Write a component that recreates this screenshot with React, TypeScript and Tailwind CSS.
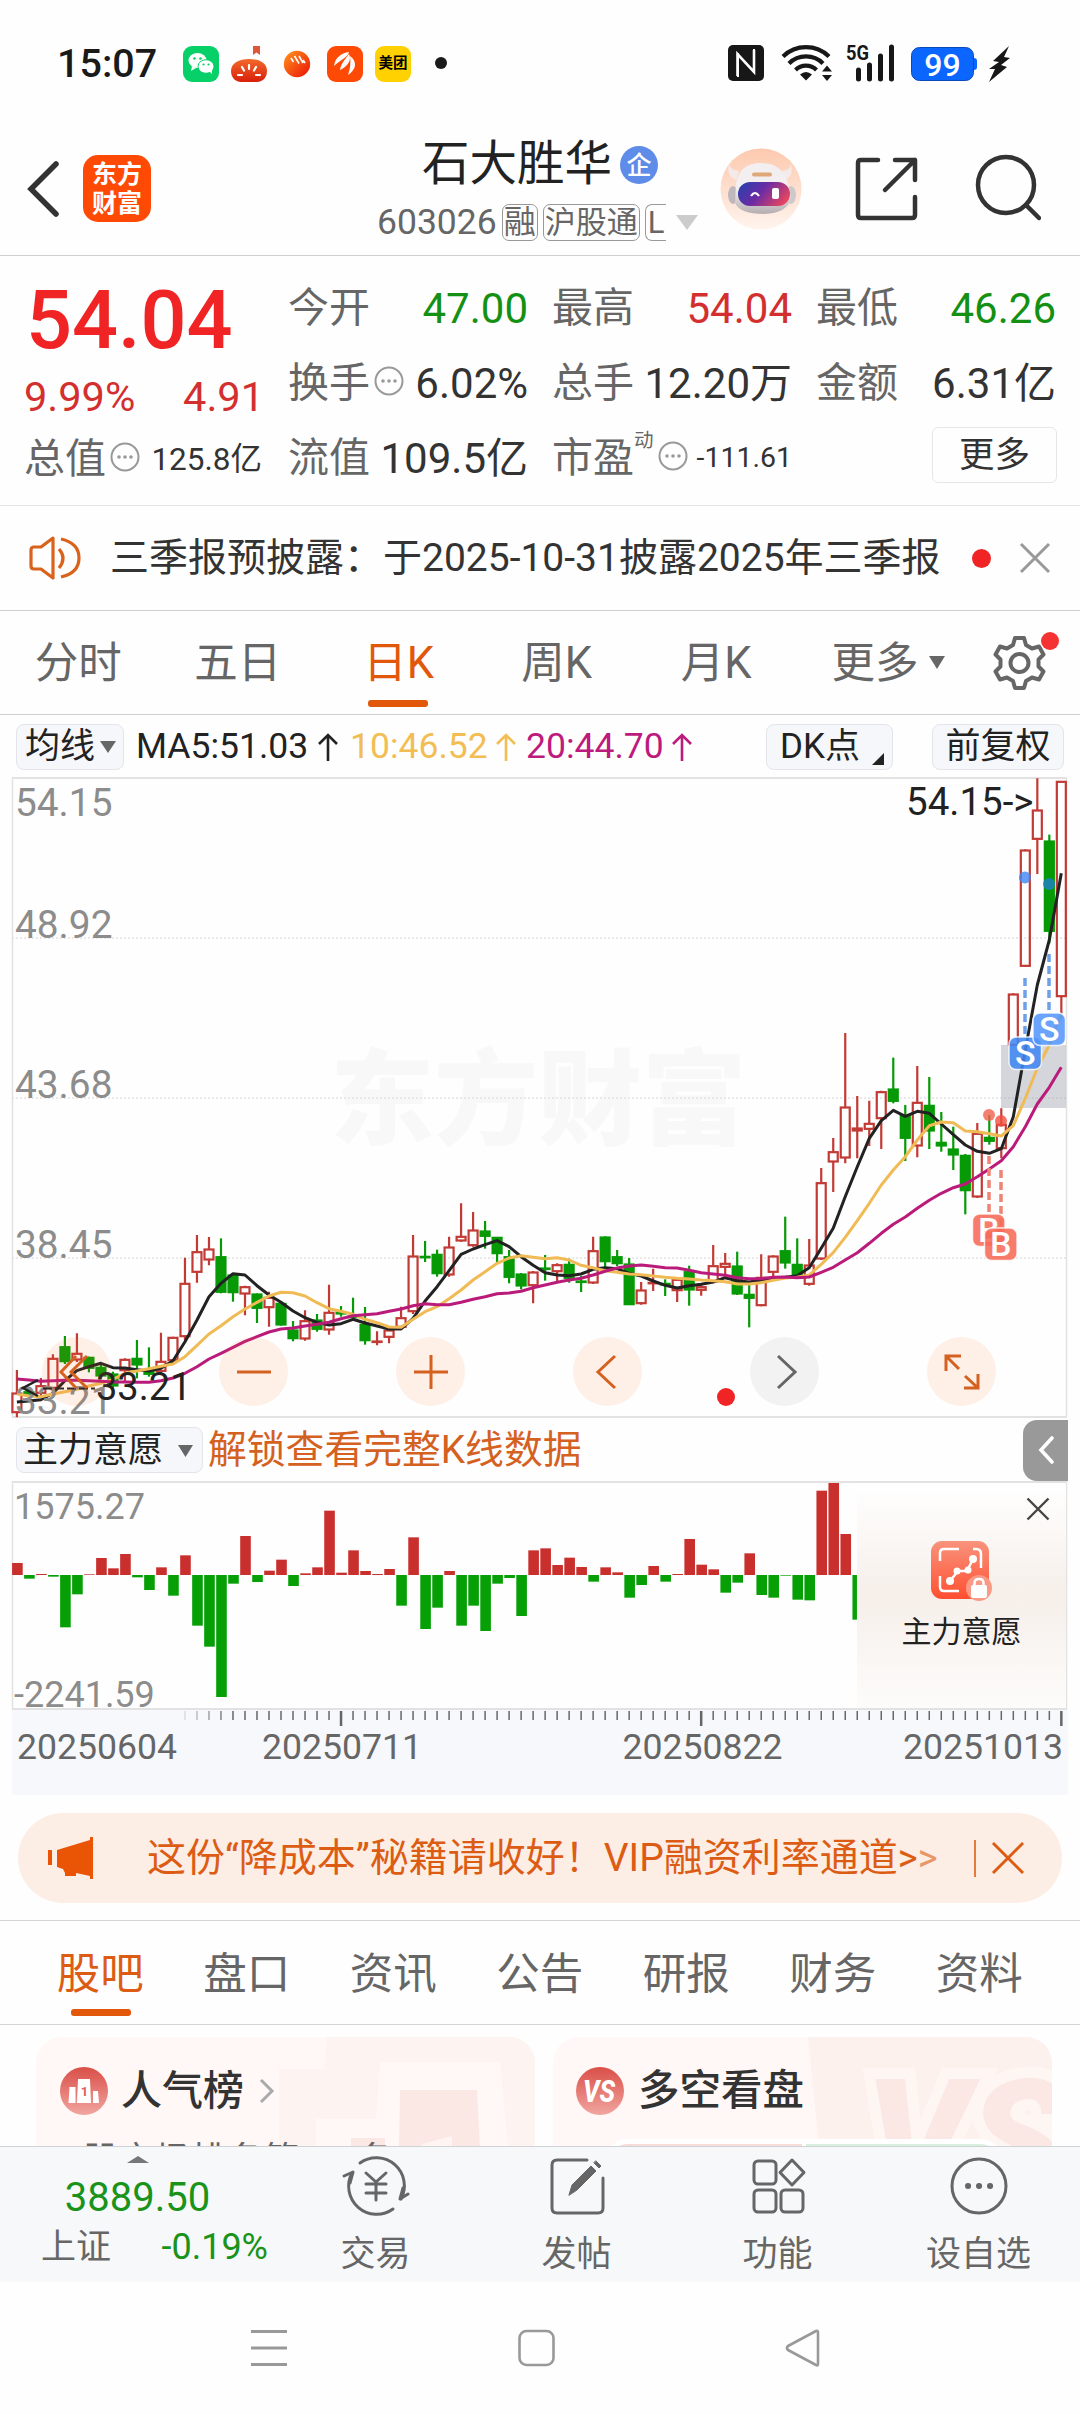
import type { ReactNode } from 'react';

// y values are in thirds of a pixel, measured from y=1000: [up, high, bodyTop, bodyBottom, low]
type Candle = [number, number, number, number, number];

const CANDLES_EARLY: Candle[] = [
  [1, 690, 759, 818, 832], [0, 745, 755, 765, 772], [1, 714, 737, 760, 768], [1, 643, 655, 745, 750],
  [0, 588, 620, 665, 672], [1, 580, 640, 660, 666], [0, 650, 652, 685, 697], [0, 670, 682, 708, 716],
  [0, 695, 702, 738, 746], [1, 655, 658, 692, 725], [0, 600, 655, 675, 715], [0, 622, 695, 703, 710],
  [1, 578, 664, 694, 700], [1, 590, 592, 662, 668], [1, 353, 430, 590, 600], [1, 285, 335, 397, 428],
  [1, 291, 327, 360, 376], [0, 295, 350, 457, 460], [0, 400, 405, 458, 485], [1, 437, 440, 462, 526],
  [0, 460, 462, 505, 549], [1, 455, 472, 503, 560], [0, 488, 490, 555, 557], [0, 543, 570, 596, 604],
  [1, 511, 542, 597, 602], [0, 522, 540, 568, 575], [1, 434, 517, 570, 584], [0, 498, 516, 522, 530],
  [0, 473, 528, 533, 540], [0, 501, 553, 602, 614], [1, 574, 603, 607, 616], [1, 565, 570, 592, 610],
  [1, 500, 533, 562, 565], [1, 285, 348, 515, 522], [0, 303, 349, 353, 366], [0, 329, 343, 401, 410],
  [1, 290, 321, 405, 410], [1, 190, 289, 303, 305], [1, 216, 270, 317, 320], [0, 243, 273, 289, 326],
  [0, 291, 292, 341, 370], [0, 330, 350, 412, 430], [0, 399, 402, 438, 448], [1, 393, 396, 437, 490],
  [0, 345, 384, 388, 422],
];

const CANDLES_LATE: Candle[] = [
  [1, 790, 794, 815, 845], [0, 776, 793, 835, 848], [0, 828, 843, 847, 876], [1, 710, 752, 849, 852],
  [0, 709, 711, 785, 804], [0, 750, 770, 791, 798], [0, 774, 792, 914, 915], [1, 846, 870, 911, 914],
  [1, 806, 847, 851, 873], [0, 838, 850, 854, 888], [1, 832, 838, 872, 906], [0, 797, 815, 870, 917],
  [1, 850, 860, 871, 887], [1, 735, 797, 846, 850], [1, 759, 790, 802, 832], [0, 755, 798, 882, 885],
  [0, 850, 883, 895, 982], [1, 763, 832, 917, 919], [1, 766, 768, 817, 830], [0, 650, 752, 789, 806],
  [0, 715, 793, 828, 832], [1, 717, 795, 853, 857], [1, 504, 548, 777, 780], [1, 414, 455, 486, 576],
  [1, 99, 321, 474, 490], [1, 288, 384, 393, 475], [1, 302, 370, 388, 438], [1, 272, 275, 356, 447],
  [0, 173, 267, 304, 310], [0, 315, 345, 415, 483], [1, 198, 307, 438, 472], [0, 231, 316, 393, 447],
  [0, 336, 427, 438, 455], [0, 380, 447, 465, 510], [0, 462, 466, 572, 643], [1, 369, 400, 591, 594],
  [0, 345, 412, 424, 434], [1, 325, 373, 446, 475], [1, -20, -18, 136, 138], [1, -452, -450, -101, -100],
  [1, -665, -570, -482, -378], [0, -496, -477, -206, -170], [1, -657, -656, -10, 55],
];

const CANDLES: Candle[] = [
  ...CANDLES_EARLY.map(([up, h, t, b, l]) => [up, h + 420, t + 420, b + 420, l + 420] as Candle),
  ...CANDLES_LATE,
];

const MA5 = [
  1206, 1203, 1199, 1180, 1142, 1112, 1100, 1090, 1103, 1104, 1109, 1113, 1105, 1082, 1025, 960, 890, 850, 821, 825,
  857, 885, 907, 933, 953, 967, 975, 971, 958, 969, 978, 987, 987, 955, 903, 860, 812, 763, 747, 734, 722, 740, 770,
  796, 818, 825, 827, 822, 808, 803, 806, 820, 828, 843, 856, 864, 857, 853, 846, 833, 842, 846, 840, 835, 832, 827,
  803, 745, 685, 590, 500, 415, 362, 331, 349, 334, 340, 372, 404, 435, 454, 460, 446, 350, 150, -45, -180, -380,
];
const MA10 = [
  1182, 1188, 1190, 1182, 1175, 1168, 1158, 1150, 1138, 1120, 1113, 1106, 1099, 1092, 1070, 1036, 1002, 977, 950, 927,
  907, 888, 877, 878, 888, 908, 926, 934, 943, 958, 968, 981, 982, 958, 935, 920, 896, 870, 840, 815, 790, 774, 767,
  772, 776, 773, 780, 796, 803, 812, 817, 822, 824, 828, 832, 835, 837, 840, 842, 845, 852, 852, 848, 841, 834, 832,
  825, 793, 758, 712, 662, 610, 555, 510, 470, 420, 377, 366, 368, 393, 395, 401, 408, 377, 295, 205, 135, 40,
];
const MA20 = [
  1137, 1140, 1144, 1142, 1141, 1141, 1142, 1144, 1146, 1146, 1147, 1147, 1142, 1134, 1120, 1100, 1077, 1060, 1042, 1024,
  1010, 996, 987, 984, 978, 973, 967, 956, 947, 944, 941, 934, 927, 917, 911, 914, 914, 907, 898, 890, 881, 879, 874,
  863, 855, 847, 840, 835, 825, 814, 804, 798, 795, 799, 803, 804, 811, 818, 822, 826, 833, 836, 836, 832, 831, 833,
  831, 817, 802, 780, 758, 730, 700, 673, 651, 625, 601, 580, 563, 552, 530, 507, 482, 440, 380, 312, 262, 202,
];

const WILL = [
  36, -11, 3, -5, -157, -58, 2, 51, 20, 63, -7, -45, 23, -62, 59, -152, -215, -366, -26, 117, -21, 13, 46, -33, 5, 23,
  193, 7, 74, 12, 3, 18, -92, 113, -162, -98, 12, -152, -92, -168, -26, -9, -123, 74, 80, 30, 52, 24, -20, 23, 8, -68,
  -30, 27, -20, 3, 108, 31, 17, -53, -23, 65, -60, -68, -2, -74, -76, 253, 276, 123, -134,
];

const cx = (i: number) => 16.9 + i * 12.005;
const cy = (v: number) => 223 + v / 3; // the chart starts at y=777
const toPoints = (line: number[]) => line.map((v, i) => `${cx(i).toFixed(1)},${cy(v).toFixed(1)}`).join(' ');

function StatusBar() {
  return (
    <div className="flex h-[126px] items-center pl-[57px]">
      <span className="w-[126px] pt-[2px] text-[39.500px] leading-none font-medium text-[#1a1a1a]">15:07</span>
      <div className="flex items-center gap-3 pt-[2px]">
        <svg width="36" height="36" viewBox="0 0 36 36">
          <rect width="36" height="36" rx="9" fill="#07d069" />
          <ellipse cx="14.5" cy="14.5" rx="9" ry="7.5" fill="#fff" />
          <path d="M9 20l-1 5 5-3z" fill="#fff" />
          <ellipse cx="23" cy="20.5" rx="8" ry="6.8" fill="#fff" stroke="#07d069" strokeWidth="1" />
          <path d="M26 25l3 3v-5z" fill="#fff" />
          <g fill="#07d069">
            <circle cx="11.5" cy="12.5" r="1.3" />
            <circle cx="17.5" cy="12.5" r="1.3" />
            <circle cx="20.5" cy="18.5" r="1.1" />
            <circle cx="25.5" cy="18.5" r="1.1" />
          </g>
        </svg>
        <svg width="36" height="38" viewBox="0 0 36 38">
          <defs>
            <linearGradient id="tomato" x1="0" y1="0" x2="0" y2="1">
              <stop offset="0" stopColor="#f26a2b" />
              <stop offset="1" stopColor="#d91f0b" />
            </linearGradient>
          </defs>
          <path d="M22 1h7v9l-3.5-2.5L22 10z" fill="#e0563a" />
          <path d="M0 26C0 18 8 14 18 14s18 4 18 12c0 7-5 11-10 11H10C5 37 0 33 0 26z" fill="url(#tomato)" />
          <path d="M18 20v4M11 22l2 3.500M25 22l-2 3.500M7 30h4M25 30h4" stroke="#fff" strokeWidth="2.200" strokeLinecap="round" />
        </svg>
        <svg width="36" height="36" viewBox="0 0 36 36">
          <defs>
            <linearGradient id="ball" x1="0" y1="0" x2="1" y2="1">
              <stop offset="0.1" stopColor="#ff8a1c" />
              <stop offset="0.8" stopColor="#ef2a0a" />
            </linearGradient>
          </defs>
          <circle cx="18" cy="18" r="13.200" fill="url(#ball)" />
          <path d="M12 12l2.500 4M15.500 10l4.500 7.500M20 10l4 7M24 14l2 3" stroke="#fff" strokeWidth="1.600" />
        </svg>
        <svg width="36" height="36" viewBox="0 0 36 36">
          <rect width="36" height="36" rx="9" fill="#ff4a05" />
          <path d="M7 20C8 12 14 7 22 6c-1 5-7 7-15 14zM13 24c1-7 5-10 9-16 3 6-1 12-9 16zM21 29c2-6 3-11 2-19 7 5 7 13-2 19z" fill="#fff" />
        </svg>
        <div className="flex h-9 w-9 items-center justify-center rounded-[9px] bg-[#ffd100] text-[14.500px] leading-none font-bold text-black">美团</div>
      </div>
      <div className="ml-6 h-3 w-3 rounded-full bg-[#1a1a1a]" />
      <svg className="ml-[278px]" width="290" height="40" viewBox="725 43 290 40">
        <rect x="728" y="45" width="36" height="36" rx="5" fill="#171717" />
        <path d="M737.500 76V54l16.500 18V50" stroke="#fff" strokeWidth="2.600" fill="none" />
        <path d="M738 53v24M754 49v24" stroke="#fff" strokeWidth="2" />
        <g fill="none" stroke="#171717" strokeWidth="4.200">
          <path d="M783 56.500a33 33 0 0 1 46 0" />
          <path d="M789 63.500a24 24 0 0 1 34 0" />
          <path d="M795.500 70a15 15 0 0 1 21 0" />
        </g>
        <path d="M800 74.500q6-5 12 0l-6 6z" fill="#171717" />
        <path d="M822 71.500l5-6 5 6zM822 75l5 6 5-6z" fill="#171717" />
        <text x="846" y="60" fontSize="20" fontWeight="700" fill="#171717" textLength="23" lengthAdjust="spacingAndGlyphs">5G</text>
        <path d="M858.500 70v9M869.500 65v14M880.500 56v23M891.500 47v32" stroke="#171717" strokeWidth="5" strokeLinecap="round" />
        <rect x="911.500" y="47.500" width="62" height="33" rx="8" fill="#0a66ff" stroke="#0b49b8" />
        <path d="M974 58q3 0 3 3v6q0 3-3 3z" fill="#0a66ff" />
        <text x="942.500" y="75.500" fontSize="32" fontWeight="500" fill="#fff" textAnchor="middle">99</text>
        <path d="M1009 46l-16 15 6 1-10 7h6l-6 13 18-15-6-2 9-7-6-1z" fill="#171717" />
      </svg>
    </div>
  );
}

function Header() {
  return (
    <div className="flex h-[130px] border-b border-[#cfd0d2] text-[#333]">
      <svg className="mt-[34px] ml-[25px]" width="36" height="58" viewBox="0 0 36 58">
        <path d="M31 4L6 29l25 25" fill="none" stroke="#333" strokeWidth="5.500" strokeLinecap="round" />
      </svg>
      <div className="mt-[29px] ml-[22px] flex h-[67px] w-[68px] flex-col items-center justify-center rounded-[15px] bg-[#ff4a05] text-[25px] leading-[29px] font-bold text-white">
        <span>东方</span>
        <span>财富</span>
      </div>
      <div className="ml-[226px] w-[343px]">
        <div className="mt-[15px] flex h-12 items-center pl-[45px] text-[47.500px] leading-none text-[#222]">
          石大胜华
          <span className="ml-[8px] flex h-[38px] w-[38px] items-center justify-center rounded-full bg-[#5f8ce8] text-[25px] font-medium text-white">企</span>
        </div>
        <div className="mt-[15px] flex h-9 items-center text-[35.500px] leading-none text-[#666]">
          <span className="pt-[2px]">603026</span>
          <span className="ml-[5px] flex h-[37px] items-center rounded-[7px] border-[1.500px] border-[#999] px-[1px] text-[32px]">融</span>
          <span className="ml-[5px] flex h-[37px] w-[97px] items-center justify-center rounded-[7px] border-[1.500px] border-[#999] text-[31px]">沪股通</span>
          <span className="ml-[5px] flex h-[37px] w-[21px] items-center rounded-l-[7px] border-[1.500px] border-r-0 border-[#999] pl-[2px] text-[31px]">L</span>
          <svg className="ml-[10px]" width="22" height="15" viewBox="0 0 22 15">
            <path d="M0 0h22L11 15z" fill="#ccc" />
          </svg>
        </div>
      </div>
      <svg className="mt-[22px]" width="82" height="82" viewBox="0 0 82 82">
        <defs>
          <linearGradient id="halo" x1="0" y1="0" x2="0" y2="1">
            <stop offset="0" stopColor="#fdc9ae" />
            <stop offset="1" stopColor="#fff4ee" />
          </linearGradient>
          <linearGradient id="visor" x1="0" y1="0.200" x2="1" y2="0.600">
            <stop offset="0" stopColor="#2b3fae" />
            <stop offset="0.450" stopColor="#6a2ba4" />
            <stop offset="1" stopColor="#e8455f" />
          </linearGradient>
          <linearGradient id="helmet" x1="0" y1="0" x2="0" y2="1">
            <stop offset="0.500" stopColor="#f3eff0" />
            <stop offset="1" stopColor="#b5adb0" />
          </linearGradient>
        </defs>
        <circle cx="41" cy="41" r="40.500" fill="url(#halo)" />
        <path d="M9 16q2 7 10 7l-3 9q-10-4-7-16zM71 16q-1 7-9 7l3 9q9-4 6-16z" fill="#f3eaea" />
        <ellipse cx="13" cy="47" rx="5" ry="9" fill="#bfb8bc" />
        <ellipse cx="71" cy="47" rx="5" ry="9" fill="#cfc8cb" />
        <path d="M16 35Q20 15 41 15t27 20l3 15Q68 65 44 66 20 66 15 55z" fill="url(#helmet)" />
        <rect x="32" y="24.500" width="20" height="4" rx="2" fill="#e0a878" />
        <rect x="18" y="34" width="52" height="24" rx="12" fill="url(#visor)" />
        <path d="M31 48q4-6 8 0" fill="none" stroke="#fff" strokeWidth="2.200" />
        <rect x="52" y="40" width="7" height="11" rx="2" fill="#fff" />
      </svg>
      <svg className="mt-[29px] ml-[51px]" width="68" height="68" viewBox="0 0 68 68">
        <g fill="none" stroke="#333" strokeWidth="4.500" strokeLinecap="round" strokeLinejoin="round">
          <path d="M25 5H8q-3 0-3 3v52q0 3 3 3h51q3 0 3-3V42" />
          <path d="M42 5h20v20M62 5L32 35" />
        </g>
      </svg>
      <svg className="mt-[27px] ml-[52px]" width="68" height="72" viewBox="0 0 68 72">
        <g fill="none" stroke="#333" strokeWidth="4.500" strokeLinecap="round">
          <circle cx="33" cy="32" r="28" />
          <path d="M53 52l13 13" />
        </g>
      </svg>
    </div>
  );
}

function Dots() {
  return (
    <svg className="mb-[6px] shrink-0" width="30" height="30" viewBox="0 0 30 30">
      <circle cx="15" cy="15" r="13.500" fill="none" stroke="#999" strokeWidth="2" />
      <circle cx="9" cy="15" r="1.800" fill="#999" />
      <circle cx="15" cy="15" r="1.800" fill="#999" />
      <circle cx="21" cy="15" r="1.800" fill="#999" />
    </svg>
  );
}

function Cell({ label, children }: { label: ReactNode; children: ReactNode }) {
  return (
    <div className="flex h-[75px] items-center justify-between leading-none">
      <span className="flex items-center text-[41px] text-[#666]">{label}</span>
      {children}
    </div>
  );
}

function Quote() {
  return (
    <div className="flex h-[250px] border-b border-[#e4e5e8] pt-[15px] pl-[24px] text-[42px] text-[#333]">
      <div className="w-[238px] leading-none">
        <div className="flex h-[98px] items-center pl-[2px] text-[81px] font-medium text-[#f02424]">54.04</div>
        <div className="-mr-[2px] flex h-[55px] items-center justify-between text-[41.500px] text-[#d32f2f]">
          <span>9.99%</span>
          <span>4.91</span>
        </div>
        <div className="flex h-[71px] items-center justify-between text-[41px] text-[#666]">
          <span className="flex items-center gap-[4px]">总值<Dots /></span>
          <span className="text-[31.500px] text-[#333]">125.8亿</span>
        </div>
      </div>
      <div className="ml-[26px] w-[240px]">
        <Cell label="今开"><span className="text-[#149114]">47.00</span></Cell>
        <Cell label={<><span className="mr-[4px]">换手</span><Dots /></>}><span>6.02%</span></Cell>
        <Cell label="流值"><span>109.5亿</span></Cell>
      </div>
      <div className="ml-[24px] w-[240px]">
        <Cell label="最高"><span className="text-[#d32f2f]">54.04</span></Cell>
        <Cell label="总手"><span>12.20万</span></Cell>
        <Cell label={<>市盈<span className="mb-9 text-[19.500px]">动</span><span className="ml-[4px]"><Dots /></span></>}>
          <span className="text-[28.500px]">-111.61</span>
        </Cell>
      </div>
      <div className="ml-[24px] w-[240px]">
        <Cell label="最低"><span className="text-[#149114]">46.26</span></Cell>
        <Cell label="金额"><span>6.31亿</span></Cell>
        <div className="mt-[6px] ml-[116px] flex h-[56px] w-[125px] items-center justify-center rounded-md border-[1.500px] border-[#e4e6e9] pt-[2px] text-[35.500px] leading-none">更多</div>
      </div>
    </div>
  );
}

function Notice() {
  return (
    <div className="flex h-[105px] items-center border-b border-[#cfd0d2] pl-[28px]">
      <svg width="54" height="48" viewBox="0 0 54 48">
        <g fill="none" stroke="#d9621c" strokeWidth="3.200" strokeLinejoin="round">
          <path d="M25 4L13 13H6q-3 0-3 3v16q0 3 3 3h7l12 9z" />
          <path d="M31 15q8 9 0 19M33 5q18 4 18 19T33 43" />
        </g>
      </svg>
      <span className="ml-[28px] pt-px text-[39px] leading-none whitespace-nowrap text-[#333]">三季报预披露：于2025-10-31披露2025年三季报</span>
      <div className="ml-[31px] h-[19px] w-[19px] shrink-0 rounded-full bg-[#f02424]" />
      <svg className="mr-[28px] ml-auto shrink-0" width="34" height="34" viewBox="0 0 34 34">
        <path d="M3 3l28 28M31 3L3 31" stroke="#999" strokeWidth="3" />
      </svg>
    </div>
  );
}

function PeriodTabs() {
  const tabs = ['分时', '五日', '日K', '周K', '月K'];
  return (
    <div className="flex h-[104px] items-center border-b border-[#cfd0d2] text-[43.500px] leading-none text-[#666]">
      {tabs.map((tab) => (
        <div
          key={tab}
          className={
            tab === '日K'
              ? 'relative flex h-full w-[159.500px] items-center justify-center pt-[3px] text-[#e2580b]'
              : 'flex h-full w-[159.500px] items-center justify-center pt-[3px] pr-[3px]'
          }
        >
          {tab}
          {tab === '日K' && <div className="absolute bottom-[7px] left-[49px] h-[7px] w-[60px] rounded-[3px] bg-[#e2580b]" />}
        </div>
      ))}
      <span className="ml-[34px] pt-[3px]">更多</span>
      <svg className="ml-[10px]" width="16" height="13" viewBox="0 0 16 13">
        <path d="M0 0h16L8 13z" fill="#666" />
      </svg>
      <div className="relative ml-[46px] h-[56px] w-[56px]">
        <svg width="56" height="56" viewBox="0 0 56 56">
          <g fill="none" stroke="#666" strokeWidth="4" strokeLinejoin="round">
            <path d="M24 3h9l2 7 6 3.500 7-2 4.500 8-5 5v7l5 5-4.500 8-7-2-6 3.500-2 7h-9l-2-7-6-3.500-7 2-4.500-8 5-5v-7l-5-5 4.500-8 7 2 6-3.500z" />
            <circle cx="28.500" cy="28" r="9" />
          </g>
        </svg>
        <div className="absolute -top-[3px] left-[50px] h-[18px] w-[18px] rounded-full bg-[#f53333]" />
      </div>
    </div>
  );
}

const pill = 'flex h-[46px] items-center rounded-lg border-[1.500px] border-[#e3e5ea] bg-[#f6f7fa] leading-none';

function UpArrow({ color }: { color: string }) {
  return (
    <svg width="20" height="28" viewBox="0 0 20 28">
      <path d="M10 28V2M1 11l9-9 9 9" fill="none" stroke={color} strokeWidth="2.600" />
    </svg>
  );
}

function AverageBar() {
  return (
    <div className="flex h-[62px] items-center pt-px pl-[16px] text-[35px] leading-none text-[#222]">
      <div className={`${pill} w-[108px] pl-[8px]`}>
        均线
        <svg className="ml-[5px]" width="16" height="12" viewBox="0 0 16 12">
          <path d="M0 0h16L8 12z" fill="#666" />
        </svg>
      </div>
      <div className="ml-[12px] flex w-[214px] items-center gap-[10px] text-[35.500px]">MA5:51.03<UpArrow color="#222" /></div>
      <div className="flex w-[176px] items-center gap-[8px] text-[35.500px] text-[#f2bd53]">10:46.52<UpArrow color="#f2bd53" /></div>
      <div className="flex items-center gap-[8px] text-[35.500px] text-[#bd1a7d]">20:44.70<UpArrow color="#bd1a7d" /></div>
      <div className={`${pill} ml-auto w-[127px] pl-[13px]`}>
        DK点
        <svg className="mt-6 ml-[12px]" width="12" height="12" viewBox="0 0 12 12">
          <path d="M12 0v12H0z" fill="#222" />
        </svg>
      </div>
      <div className={`${pill} mr-[16px] ml-[39px] w-[132px] justify-center`}>前复权</div>
    </div>
  );
}

function Marker({ x, y, label, fill }: { x: number; y: number; label: string; fill: string }) {
  return (
    <g>
      <rect x={x} y={y} width="32.500" height="32.500" rx="7" fill={fill} fillOpacity="0.880" stroke="#fff" strokeOpacity="0.800" strokeWidth="1.500" />
      <text x={x + 16.250} y={y + 28} fontSize="34" fontWeight="500" fill="#fff" textAnchor="middle">{label}</text>
    </g>
  );
}

const CONTROLS = [
  { d: 'M10 -16L-6 0l16 16M-1 -16L-16 0L-1 16', quiet: false },
  { d: 'M-17 0h34', quiet: false },
  { d: 'M-17 0h34M0 -17v34', quiet: false },
  { d: 'M7 -16L-10 0L7 16', quiet: false },
  { d: 'M-7 -16L10 0L-7 16', quiet: true },
  { d: 'M-16 -1V-16H-1M-16 -16L-3 -3M16 2V16H2M16 16L3 4', quiet: false },
];

function KLineChart() {
  return (
    <div className="relative h-[642px]">
      <svg className="block" width="1080" height="642" viewBox="0 0 1080 642">
        <text x="330" y="360" fontSize="104" fontWeight="900" fill="#f8f8f8">东方财富</text>
        {[161, 321, 481].map((y) => (
          <path key={y} d={`M12 ${y}H1067`} stroke="#e2e2e2" strokeWidth="1.500" strokeDasharray="2 2" />
        ))}
        <path d="M12.500 1V640M1066.500 1V640" stroke="#e2e2e2" strokeWidth="1.500" />
        <path d="M12 1H1067M12 640H1067" stroke="#e2e2e2" strokeWidth="2" />
        {CANDLES.map(([up, high, top, bottom, low], i) => {
          const x = cx(i);
          const color = up ? '#c23a35' : '#069a06';
          return (
            <g key={i} stroke={color} strokeWidth="2.200">
              <path d={up ? `M${x} ${cy(high)}V${cy(top)}M${x} ${cy(bottom)}V${cy(low)}` : `M${x} ${cy(high)}V${cy(low)}`} />
              <rect
                x={x - 4.500}
                y={cy(top) + 0.500}
                width="9"
                height={Math.max((bottom - top) / 3 - 1, 0.500)}
                fill={up ? 'none' : color}
              />
            </g>
          );
        })}
        <rect x="1001" y="268" width="65" height="63" fill="#9aa0ab" fillOpacity="0.420" />
        <g fill="none" strokeWidth="3" strokeLinejoin="round">
          <polyline points={toPoints(MA5)} stroke="#222" />
          <polyline points={toPoints(MA10)} stroke="#f0bb55" />
          <polyline points={toPoints(MA20)} stroke="#ba1b7a" />
        </g>
        <g fill="none" strokeWidth="3.500" strokeDasharray="8 4">
          <path d="M1025 201v56M1049 177v56" stroke="#6ea0ea" />
          <path d="M989 379v57M1001 393v60" stroke="#ee8473" />
        </g>
        <g fillOpacity="0.800">
          <circle cx="1025" cy="100.500" r="6" fill="#3f86f4" />
          <circle cx="1049" cy="107" r="6" fill="#1f7fd0" />
          <circle cx="989" cy="338" r="6" fill="#f1604d" />
          <circle cx="1001" cy="344" r="6" fill="#f1503d" />
        </g>
        <Marker x={1009} y={260} label="S" fill="#4187f2" />
        <Marker x={1033} y={236} label="S" fill="#5496fa" />
        <Marker x={972.500} y={437} label="B" fill="#f66a58" />
        <Marker x={984.500} y={451} label="B" fill="#f66a58" />
        <g fontSize="38.800" fill="#8c8c8c">
          <text x="15" y="39">54.15</text>
          <text x="15" y="161">48.92</text>
          <text x="15" y="321">43.68</text>
          <text x="15" y="481">38.45</text>
          <text x="15" y="637">33.21</text>
        </g>
        <text x="906" y="37.500" fontSize="38.500" fill="#222">54.15-&gt;</text>
        <text x="96" y="623" fontSize="38" fill="#222">33.21</text>
        <path d="M38 603L23 611l15 8" fill="none" stroke="#222" strokeWidth="2.500" />
        <path d="M43 611.500h52" stroke="#222" strokeWidth="2.200" strokeDasharray="9 3" />
      </svg>
      {/* zoom and pan buttons float over the candles */}
      <div className="absolute top-[560px] left-[42px] flex gap-[108px]">
        {CONTROLS.map((c) => (
          <div
            key={c.d}
            className={
              c.quiet
                ? 'flex h-[69px] w-[69px] items-center justify-center rounded-full bg-[#f2f2f2]'
                : 'flex h-[69px] w-[69px] items-center justify-center rounded-full bg-[#fb6a1e]/10'
            }
          >
            <svg width="60" height="50" viewBox="-30 -25 60 50">
              <path d={c.d} fill="none" stroke={c.quiet ? '#666' : '#d4611f'} strokeWidth="3" />
            </svg>
          </div>
        ))}
      </div>
      <div className="absolute top-[611px] left-[717px] h-[18px] w-[18px] rounded-full bg-[#f02424]" />
    </div>
  );
}

function IndicatorBar() {
  return (
    <div className="flex h-[62px] items-center pl-[16px] leading-none">
      <div className={`${pill} w-[187px] pt-px pl-[6px] text-[35px] text-[#222]`}>
        主力意愿
        <svg className="ml-[15px]" width="15" height="12" viewBox="0 0 15 12">
          <path d="M0 0h15L7.500 12z" fill="#666" />
        </svg>
      </div>
      <span className="ml-[5px] pt-px text-[38.800px] text-[#d4611f]">解锁查看完整K线数据</span>
      <div className="mr-3 ml-auto flex h-[61px] w-[45px] items-center justify-center rounded-l-[14px] bg-[#999]">
        <svg width="18" height="30" viewBox="0 0 18 30">
          <path d="M15 3L4 15l11 12" fill="none" stroke="#fff" strokeWidth="3.600" strokeLinecap="round" />
        </svg>
      </div>
    </div>
  );
}

function WillChart() {
  return (
    <div className="relative h-[229px]">
      <svg className="block" width="1080" height="229" viewBox="0 0 1080 229">
        <path d="M12.500 0V229M1066.500 0V229" stroke="#e2e2e2" strokeWidth="1.500" />
        <path d="M12 1H1067M12 228H1067" stroke="#e2e2e2" strokeWidth="2" />
        {WILL.map((v, i) => (
          <rect
            key={i}
            x={cx(i) - 4.800}
            y={v > 0 ? 94 - v / 3 : 94}
            width={i === WILL.length - 1 ? 4.500 : 10.600}
            height={Math.abs(v) / 3}
            fill={v > 0 ? '#c92f2d' : '#06a006'}
          />
        ))}
        <g fontSize="36" fill="#8c8c8c">
          <text x="14" y="37.500">1575.27</text>
          <text x="14" y="226">-2241.59</text>
        </g>
      </svg>
      {/* locked part of the indicator */}
      <div className="absolute top-[2px] left-[857px] flex h-[225px] w-[209px] flex-col items-center bg-gradient-to-b from-white via-[#f6efea] to-[#fdfcfb] pt-[57px]">
        <svg width="62" height="62" viewBox="0 0 62 62">
          <defs>
            <linearGradient id="lock" x1="0" y1="0" x2="0" y2="1">
              <stop offset="0" stopColor="#f8937c" />
              <stop offset="1" stopColor="#ff4f30" />
            </linearGradient>
          </defs>
          <rect x="0" y="1" width="58" height="58" rx="11" fill="url(#lock)" />
          <path d="M28 9H13q-4 0-4 4v8M42 9h3q5 0 5 5v14M9 36v11q0 4 4 4h15" fill="none" stroke="#fff" strokeWidth="2.500" />
          <path d="M19 41l8-10h9l6-12" fill="none" stroke="#fff" strokeWidth="2.500" />
          <g fill="#fff">
            <circle cx="19" cy="41" r="4" />
            <circle cx="26" cy="31" r="3.500" />
            <circle cx="37" cy="30" r="3.500" />
            <circle cx="42" cy="19" r="4" />
          </g>
          <circle cx="48" cy="48" r="13" fill="#f99a86" />
          <rect x="40" y="45" width="16" height="13" rx="2" fill="#fff" />
          <path d="M43.500 46v-3q0-4 4.500-4t4.500 4v3" fill="none" stroke="#fff" strokeWidth="2.500" />
        </svg>
        <span className="mt-[15px] text-[30px] leading-none text-[#222]">主力意愿</span>
        <svg className="absolute top-[14px] right-[16px]" width="24" height="24" viewBox="0 0 24 24">
          <path d="M1.500 1.500l21 21M22.500 1.500l-21 21" stroke="#444" strokeWidth="2.400" />
        </svg>
      </div>
    </div>
  );
}

function TimeAxis() {
  const ticks = Array.from({ length: 74 }, (_, k) => k + 14);
  return (
    <div className="mx-3 h-[85px] bg-[#f7f8fb]">
      <svg className="block" width="1056" height="85" viewBox="12 0 1056 85">
        {ticks.map((i) => {
          const major = i % 30 === 27;
          return (
            <path
              key={i}
              d={`M${cx(i)} 1V${major ? 16 : 10}`}
              stroke="#666"
              strokeWidth={major ? 2.500 : 1.500}
              strokeOpacity={Math.min((i - 13) / 5, 1)}
            />
          );
        })}
        <g fontSize="35.600" fill="#666">
          <text x="17" y="49">20250604</text>
          <text x="342" y="49" textAnchor="middle">20250711</text>
          <text x="702.500" y="49" textAnchor="middle">20250822</text>
          <text x="1063" y="49" textAnchor="end">20251013</text>
        </g>
      </svg>
    </div>
  );
}

function Promo() {
  return (
    <div className="mx-[18px] mt-[18px] flex h-[90px] items-center rounded-[45px] bg-[#fceee5] pl-[30px] leading-none text-[#dd5c14]">
      <svg width="46" height="42" viewBox="0 0 46 42">
        <path d="M0 13h4v15H0zM9 13L42 3V0h3v42h-3v-3l-14-3v3H17v-3l-2-4-6-2z" fill="#e95504" />
      </svg>
      <span className="ml-[53px] text-[39px] whitespace-nowrap">
        这份“降成本”秘籍请收好！VIP融资利率通道
        <span className="text-[38px]">&gt;<span className="opacity-60">&gt;</span></span>
      </span>
      <div className="ml-auto h-[37px] w-[2px] bg-[#dd5c14]/80" />
      <svg className="mr-[37px] ml-[15px]" width="34" height="34" viewBox="0 0 34 34">
        <path d="M2 2l30 30M32 2L2 32" stroke="#dd5c14" strokeWidth="3" />
      </svg>
    </div>
  );
}

function SectionTabs() {
  const tabs = ['股吧', '盘口', '资讯', '公告', '研报', '财务', '资料'];
  return (
    <div className="mt-[17px] flex h-[105px] items-center border-y border-[#d4d5d7] pl-[27px] text-[43.500px] leading-none text-[#666]">
      {tabs.map((tab, i) => (
        <div
          key={tab}
          className={
            i === 0
              ? 'relative flex h-full w-[146.500px] items-center justify-center pt-[5px] text-[#dd5c14]'
              : 'flex h-full w-[146.500px] items-center justify-center pt-[5px]'
          }
        >
          {tab}
          {i === 0 && <div className="absolute bottom-[8px] left-[44px] h-[7px] w-[60px] rounded-[3px] bg-[#e2580b]" />}
        </div>
      ))}
    </div>
  );
}

function Cards() {
  return (
    <div className="flex h-[121px] gap-[18px] overflow-hidden pt-[12px] pl-[36px] text-[41px] leading-none font-medium text-[#333]">
      <div className="relative h-[180px] w-[499px] shrink-0 overflow-hidden rounded-[26px] bg-[#fff8f6]">
        <svg className="absolute top-0 left-0" width="499" height="110" viewBox="0 0 499 110">
          <path d="M291 0H499V110H472L464 25H344L340 82H280V110H243V32H288z" fill="#fdf3f0" />
          <path d="M364 53h77l3 57h-81zM315 101h34v9h-34z" fill="#fbe8e5" />
          <path d="M386 107l30-8v11h-30z" fill="#fff4f1" />
        </svg>
        <div className="relative flex h-[108px] items-center pl-[24px]">
          <svg width="48" height="48" viewBox="0 0 48 48">
            <defs>
              <linearGradient id="badge" x1="0" y1="0" x2="0" y2="1">
                <stop offset="0" stopColor="#d94f48" />
                <stop offset="1" stopColor="#f2a5a0" />
              </linearGradient>
            </defs>
            <circle cx="24" cy="24" r="24" fill="url(#badge)" />
            <path d="M9.500 20h6v16h-7zM18 12h12l1 24H17zM33 24h5l1 12h-6z" fill="#fff" />
            <text x="24.500" y="29" fontSize="13" fontWeight="700" fill="#d9605a" textAnchor="middle">1</text>
          </svg>
          <span className="ml-[13px]">人气榜</span>
          <svg className="ml-[15px]" width="16" height="26" viewBox="0 0 16 26">
            <path d="M2 2l11 11L2 24" fill="none" stroke="#aaa" strokeWidth="3" />
          </svg>
        </div>
        <div className="relative -mt-[2px] flex gap-[58px] pl-[47px] text-[36px] font-normal text-[#666]">
          <span>股市场排名第</span>
          <span>名</span>
        </div>
      </div>
      <div className="relative h-[180px] w-[499px] shrink-0 overflow-hidden rounded-[26px] bg-[#fff8f6]">
        <svg className="absolute top-0 left-0" width="499" height="110" viewBox="0 0 499 110">
          <path d="M255 0H499V110H266z" fill="#fdf1ee" />
          <text x="312" y="158" fontSize="162" fontWeight="900" fontStyle="italic" fill="#fbe8e5" stroke="#fef6f3" strokeWidth="22" paintOrder="stroke">VS</text>
        </svg>
        <div className="relative flex h-[108px] items-center pl-[23px]">
          <svg width="48" height="48" viewBox="0 0 48 48">
            <circle cx="24" cy="24" r="24" fill="url(#badge)" />
            <text x="23" y="35" fontSize="31" fontWeight="800" fontStyle="italic" fill="#fff" textAnchor="middle" textLength="32" lengthAdjust="spacingAndGlyphs">VS</text>
          </svg>
          <span className="ml-[14px] text-[41.500px]">多空看盘</span>
        </div>
        <div className="absolute top-[102px] left-[54px] flex h-[40px] w-[394px] gap-1 rounded-[20px] border-[5px] border-white bg-white">
          <div className="w-1/2 rounded-l-[16px] bg-[#f8dcd9]" />
          <div className="w-1/2 rounded-r-[16px] bg-[#daf0de]" />
        </div>
      </div>
    </div>
  );
}

function ToolItem({ label, children }: { label: string; children: ReactNode }) {
  return (
    <div className="flex w-[201px] flex-col items-center pt-[7px]">
      <svg width="68" height="64" viewBox="-34 -32 68 64" fill="none" stroke="#666" strokeWidth="3" strokeLinecap="round" strokeLinejoin="round">
        {children}
      </svg>
      <span className="mt-[19px] text-[35px] leading-none text-[#666]">{label}</span>
    </div>
  );
}

function BottomBar() {
  return (
    <div className="flex h-[136px] border-t border-[#cfd3d8] bg-[#f7f8fa]">
      <div className="flex w-[275px] flex-col items-center leading-none text-[#1a931a]">
        <svg className="mt-[9px]" width="22" height="7" viewBox="0 0 22 7">
          <path d="M0 7L11 0l11 7z" fill="#777" />
        </svg>
        <span className="mt-[15px] text-[40px]">3889.50</span>
        <div className="mt-[11px] flex w-full items-center justify-between pr-[7px] pl-[41px] text-[36px]">
          <span className="text-[35px] text-[#666]">上证</span>
          <span>-0.19%</span>
        </div>
      </div>
      <ToolItem label="交易">
        <path d="M-16 -23A28 28 0 0 1 25 13M17 23A28 28 0 0 1 -24 -13" />
        <path d="M-32 -10L-23 -14L-26 -3M32 8L24 13L27 2" />
        <path d="M-10 -13L0 -4L10 -13M-10 -2H10M-10 7H10M0 -4V14" />
      </ToolItem>
      <ToolItem label="发帖">
        <path d="M10 -26H-20q-5 0-5 5V22q0 5 5 5H21q5 0 5-5V-8" />
        <path d="M-8 9L-5 -1L14 -20L19 -15L0 4zM19 -25L24 -20L22 -18L17 -23z" fill="#666" strokeWidth="1" />
      </ToolItem>
      <ToolItem label="功能">
        <rect x="-24" y="-25" width="22" height="23" rx="4" />
        <rect x="-24" y="4" width="22" height="22" rx="4" />
        <rect x="3" y="4" width="22" height="22" rx="4" />
        <path d="M14 -26L26 -13.500L14 -1L2 -13.500z" />
      </ToolItem>
      <ToolItem label="设自选">
        <circle r="27" />
        <path d="M-11 0h.1M0 0h.1M11 0h.1" strokeWidth="6" />
      </ToolItem>
    </div>
  );
}

function SystemNav() {
  return (
    <div className="flex h-[131px] pt-[46px]">
      <svg className="ml-[251px]" width="36" height="40" viewBox="0 0 36 40">
        <path d="M0 3.500h36M0 20h36M0 36.500h36" stroke="#999" strokeWidth="3" />
      </svg>
      <svg className="ml-[229px]" width="40" height="40" viewBox="0 0 40 40">
        <rect x="3.500" y="3" width="34" height="34" rx="7" fill="none" stroke="#999" strokeWidth="2.600" />
      </svg>
      <svg className="ml-[228px]" width="38" height="40" viewBox="0 0 38 40">
        <path d="M34 5v31q0 2-2 1L4 22q-2-2 0-4L32 3q2-1 2 2z" fill="none" stroke="#999" strokeWidth="2.600" strokeLinejoin="round" />
      </svg>
    </div>
  );
}

export default function App() {
  return (
    <div className="h-[2414px] w-[1080px] overflow-hidden bg-[#fefefe] font-['Roboto','Noto_Sans_CJK_SC',sans-serif]">
      <StatusBar />
      <Header />
      <Quote />
      <Notice />
      <PeriodTabs />
      <AverageBar />
      <KLineChart />
      <IndicatorBar />
      <WillChart />
      <TimeAxis />
      <Promo />
      <SectionTabs />
      <Cards />
      <BottomBar />
      <SystemNav />
    </div>
  );
}
